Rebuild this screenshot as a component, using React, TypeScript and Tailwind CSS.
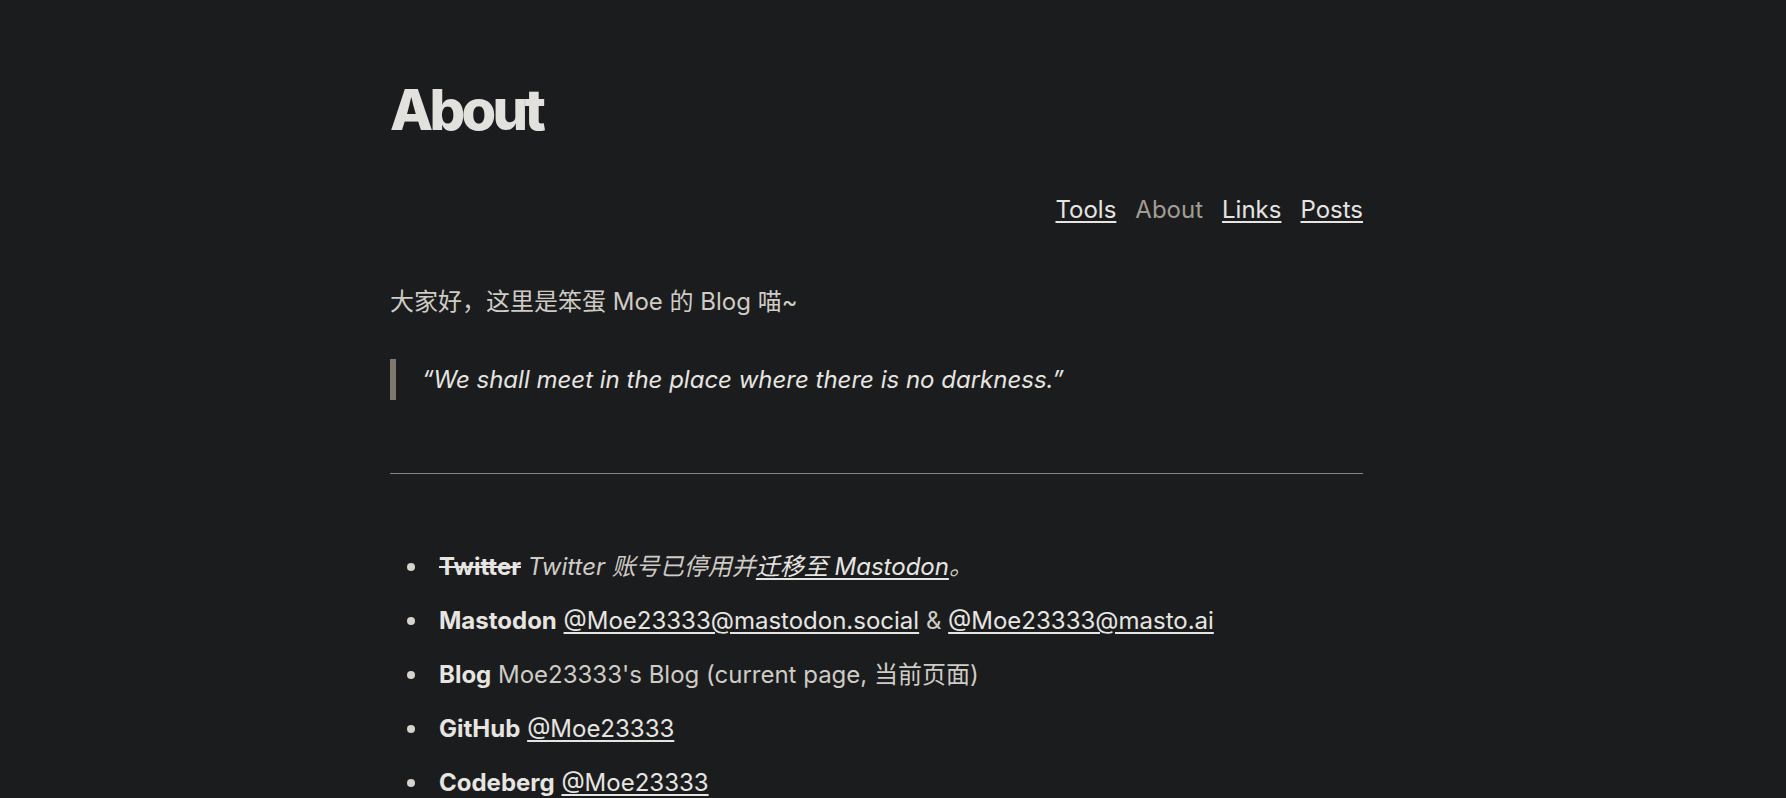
import React from 'react';

const font = { fontFamily: 'Inter, "Noto Sans CJK SC", sans-serif' };

const Bullet: React.FC = () => (
  <span className="mr-[24px] h-[8px] w-[8px] shrink-0 rounded-full bg-[#d6d3ce]" />
);

const linkCls = 'text-[#e7e5e1] underline decoration-[2px] underline-offset-[3px]';

const App: React.FC = () => {
  return (
    <div className="min-h-screen bg-[#1b1c1e] pr-[33px] text-[24px] leading-[35px] text-[#cfcbc5]" style={font}>
      <main className="mx-auto max-w-[973px] pt-[77px]">
        <h1 className="text-[56px] font-extrabold leading-[67px] tracking-[-0.065em] text-[#e3e1dd]">About</h1>

        {/* Top navigation */}
        <nav className="mt-[48px] flex justify-end gap-[19px]">
          <a className={linkCls}>Tools</a>
          <span className="text-[#a29c93]">About</span>
          <a className={linkCls}>Links</a>
          <a className={linkCls}>Posts</a>
        </nav>

        <p className="mt-[57px]">大家好，这里是笨蛋 Moe 的 Blog 喵~</p>

        <blockquote className="mt-[40px] border-l-[6px] border-[#7e786f] py-[3px] pl-[26px] italic text-[#e7e5e1]">
          “We shall meet in the place where there is no darkness.”
        </blockquote>

        <hr className="mt-[73px] border-t border-[#8a8378]" />

        <ul className="mt-[75px] ml-[17px] flex flex-col gap-[19px]">
          <li className="flex items-center">
            <Bullet />
            <span>
              <strong className="font-bold text-[#e7e5e1] line-through decoration-[2px]">Twitter</strong>{' '}
              <em>
                Twitter 账号已停用并<a className={linkCls}>迁移至 Mastodon</a>。
              </em>
            </span>
          </li>
          <li className="flex items-center">
            <Bullet />
            <span>
              <strong className="font-bold text-[#e7e5e1]">Mastodon</strong>{' '}
              <a className={linkCls}>@Moe23333@mastodon.social</a> &amp;{' '}
              <a className={linkCls}>@Moe23333@masto.ai</a>
            </span>
          </li>
          <li className="flex items-center">
            <Bullet />
            <span>
              <strong className="font-bold text-[#e7e5e1]">Blog</strong> Moe23333's Blog (current page, 当前页面)
            </span>
          </li>
          <li className="flex items-center">
            <Bullet />
            <span>
              <strong className="font-bold text-[#e7e5e1]">GitHub</strong> <a className={linkCls}>@Moe23333</a>
            </span>
          </li>
          <li className="flex items-center">
            <Bullet />
            <span>
              <strong className="font-bold text-[#e7e5e1]">Codeberg</strong> <a className={linkCls}>@Moe23333</a>
            </span>
          </li>
        </ul>
      </main>
    </div>
  );
};

export default App;
